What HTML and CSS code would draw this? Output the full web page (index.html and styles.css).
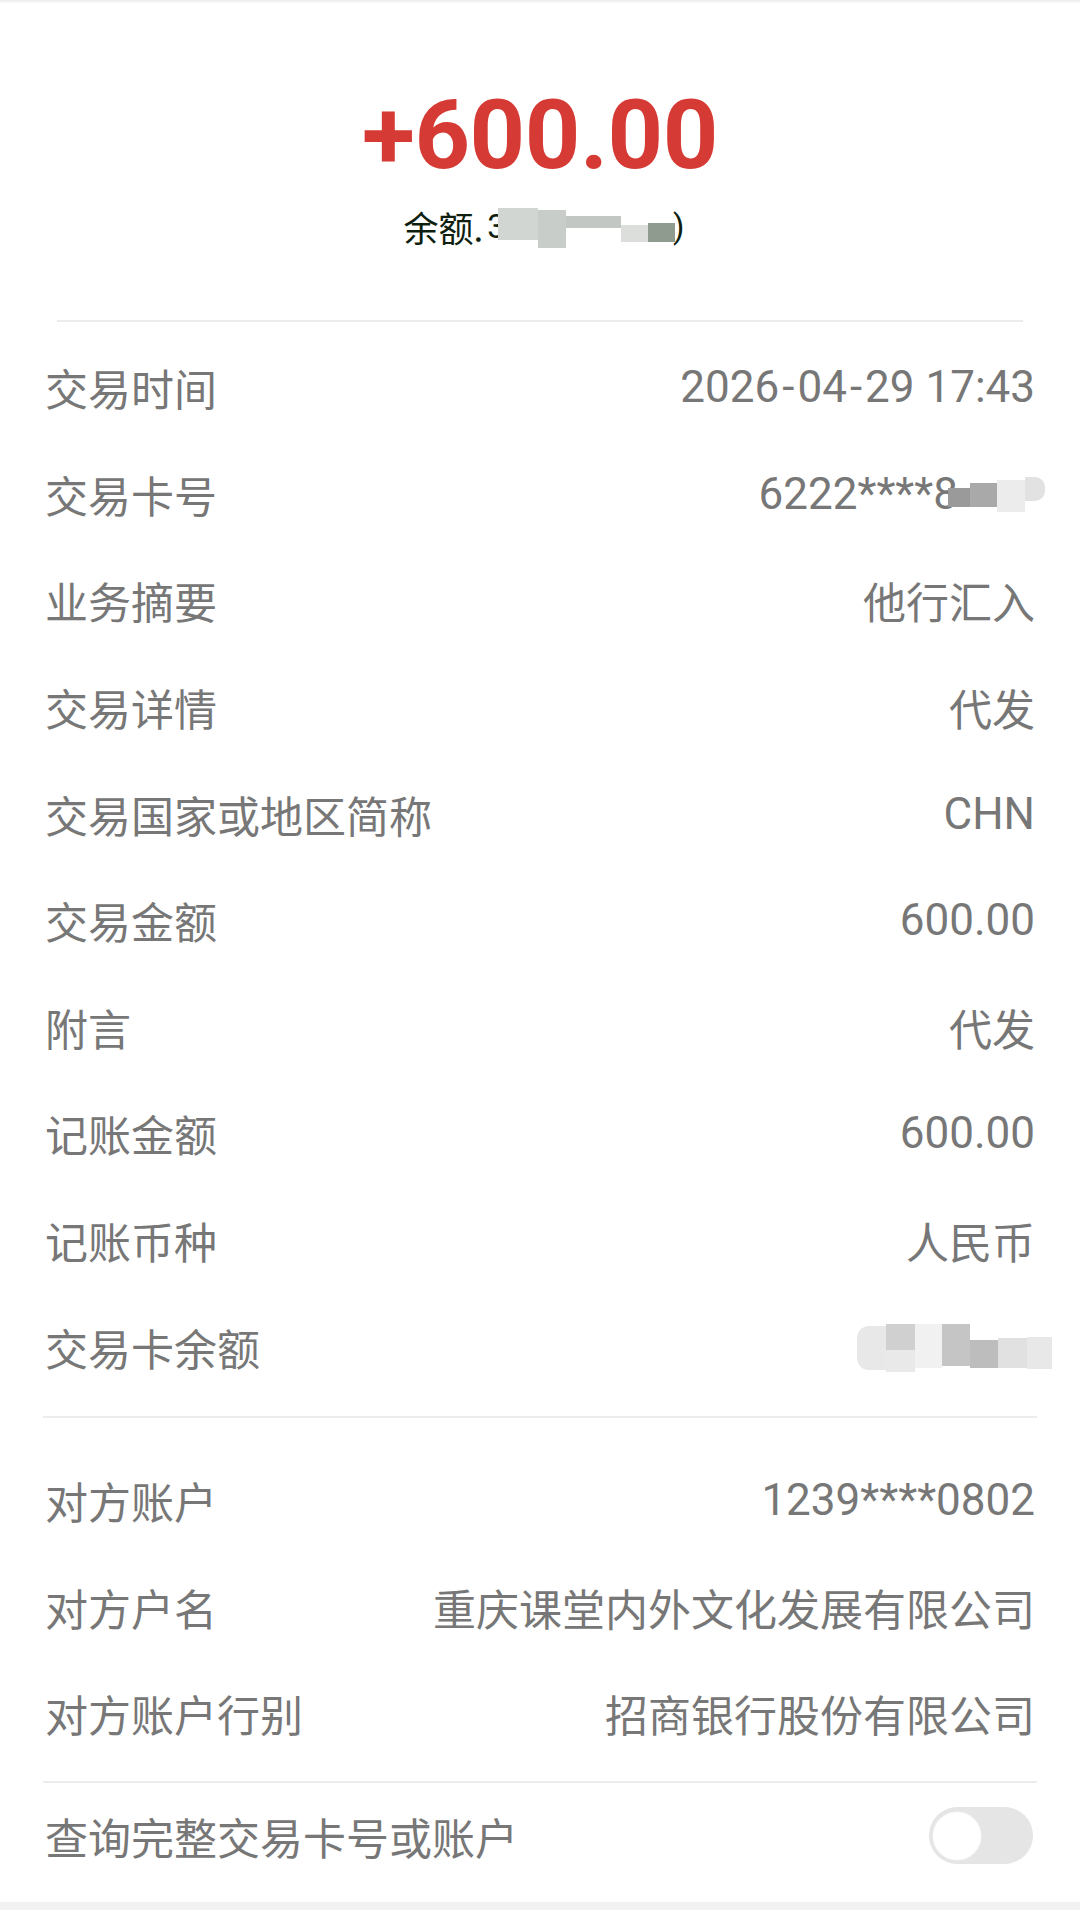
FILE: index.html
```html
<!DOCTYPE html>
<html lang="zh-CN">
<head>
<meta charset="utf-8">
<title>交易详情</title>
<link rel="stylesheet" href="styles.css">
</head>
<body>
<div class="page">
  <div class="topshade"></div>
  <header class="hero">
    <div class="amount">+600.00</div>
    <div class="balance">
      <span class="balance-label">余额.</span>
      <span class="mosaic m-bal">
        <span class="digit-peek">3</span>
        <i class="c c1"></i><i class="c c2"></i><i class="c c3"></i><i class="c c4"></i><i class="c c5"></i>
        <span class="digit-peek tail">)</span>
      </span>
    </div>
  </header>
  <div class="rule rule-top"></div>

  <section class="rows">
    <div class="row"><span class="k">交易时间</span><span class="v num">2026<span class="hy">-</span>04<span class="hy">-</span>29 17:43</span></div>
    <div class="row"><span class="k">交易卡号</span><span class="v num card">6222****8<span class="mosaic m-card"><i class="c d1"></i><i class="c d2"></i><i class="c d3"></i><i class="c d4"></i></span></span></div>
    <div class="row"><span class="k">业务摘要</span><span class="v">他行汇入</span></div>
    <div class="row"><span class="k">交易详情</span><span class="v">代发</span></div>
    <div class="row"><span class="k">交易国家或地区简称</span><span class="v num">CHN</span></div>
    <div class="row"><span class="k">交易金额</span><span class="v num">600.00</span></div>
    <div class="row"><span class="k">附言</span><span class="v">代发</span></div>
    <div class="row"><span class="k">记账金额</span><span class="v num">600.00</span></div>
    <div class="row"><span class="k">记账币种</span><span class="v">人民币</span></div>
    <div class="row"><span class="k">交易卡余额</span><span class="v"><span class="mosaic m-cb"><i class="c e1"></i><i class="c e2"></i><i class="c e3"></i><i class="c e4"></i><i class="c e5"></i><i class="c e6"></i><i class="c e7"></i></span></span></div>
  </section>
  <div class="rule"></div>

  <section class="rows rows-b">
    <div class="row"><span class="k">对方账户</span><span class="v num">1239****0802</span></div>
    <div class="row"><span class="k">对方户名</span><span class="v">重庆课堂内外文化发展有限公司</span></div>
    <div class="row"><span class="k">对方账户行别</span><span class="v">招商银行股份有限公司</span></div>
  </section>
  <div class="rule"></div>

  <div class="row row-toggle">
    <span class="k">查询完整交易卡号或账户</span>
    <span class="toggle"><span class="knob"></span></span>
  </div>
  <div class="bottom-band"></div>
</div>
</body>
</html>
```

FILE: styles.css
```css
* { box-sizing: border-box; }
html, body { margin: 0; padding: 0; background: #ffffff; }
body {
  font-family: Roboto, "Noto Sans CJK SC", "Noto Sans", sans-serif;
  color: #777777;
}
.page {
  width: 1080px;
  height: 1910px;
  display: flex;
  flex-direction: column;
  overflow: hidden;
}
.topshade {
  height: 4px;
  background: linear-gradient(#ececec, #ffffff);
}
.hero {
  height: 316px;
  display: flex;
  flex-direction: column;
  align-items: center;
  padding-top: 76px;
}
.amount {
  font-family: Roboto, "Noto Sans", sans-serif;
  font-weight: 700;
  font-size: 97px;
  line-height: 110px;
  color: #d63a34;
  letter-spacing: -0.5px;
}
.balance {
  margin-top: 16px;
  height: 42px;
  display: flex;
  align-items: center;
  font-family: "Noto Sans CJK SC", sans-serif;
  font-size: 35px;
  color: #0f1f0f;
}
.balance-label { line-height: 42px; }
.mosaic { display: inline-flex; align-items: flex-start; position: relative; }
.c { display: block; font-style: normal; }
.m-bal { margin-left: 4px; height: 38px; }
.digit-peek { font-family: Roboto, sans-serif; color: #0f1f0f; font-size: 33px; line-height: 38px; }
.m-bal .digit-peek { margin-right: -8px; }
.m-bal .tail { margin-left: -2px; }
.c1 { width: 40px; height: 32px; background: #d2d6d2; margin-top: 0; }
.c2 { width: 28px; height: 38px; background: #c9cdc9; margin-top: 2px; }
.c3 { width: 55px; height: 12px; background: #c3c7c3; margin-top: 8px; }
.c4 { width: 27px; height: 17px; background: #dcdedc; margin-top: 17px; }
.c5 { width: 27px; height: 19px; background: #8e9b8e; margin-top: 15px; }

.rule {
  height: 2px;
  background: #ececec;
  margin: 0 43px;
  flex: none;
}
.rule-top { margin: 0 57px; }

.rows { padding-top: 12px; padding-bottom: 16px; }
.rows-b { padding-top: 29px; padding-bottom: 14px; }
.row {
  height: 106.6px;
  padding: 0 45px;
  display: flex;
  align-items: center;
  justify-content: space-between;
  font-size: 43px;
  line-height: 50px;
  color: #777777;
}
.k { font-family: "Noto Sans CJK SC", sans-serif; white-space: nowrap; }
.v { font-family: "Noto Sans CJK SC", sans-serif; white-space: nowrap; text-align: right; display: inline-flex; align-items: center; }
.num { font-family: Roboto, "Noto Sans CJK SC", sans-serif; font-size: 44px; letter-spacing: 0; }
.hy { margin: 0 3px; }
.card { margin-right: -10px; }
.m-card { margin-left: -10px; height: 40px; }
.d1 { width: 22px; height: 19px; background: #9a9a9a; margin-top: 14px; }
.d2 { width: 27px; height: 24px; background: #a9a9a9; margin-top: 9px; }
.d3 { width: 28px; height: 32px; background: #ececec; margin-top: 6px; }
.d4 { width: 20px; height: 24px; background: #e2e2e2; margin-top: 3px; border-radius: 0 10px 10px 0; }

.m-cb { margin-right: -17px; height: 50px; }
.e1 { width: 29px; height: 44px; background: #e8e8e8; margin-top: 4px; border-radius: 12px 0 0 12px; }
.e2 { width: 29px; height: 48px; background: linear-gradient(#d0d0d0 0 55%, #e9e9e9 55%); margin-top: 2px; }
.e3 { width: 27px; height: 44px; background: #f1f1f1; margin-top: 2px; }
.e4 { width: 28px; height: 42px; background: #c5c5c5; margin-top: 2px; }
.e5 { width: 28px; height: 28px; background: #bdbdbd; margin-top: 18px; }
.e6 { width: 29px; height: 30px; background: #e1e1e1; margin-top: 16px; }
.e7 { width: 25px; height: 32px; background: #e8e8e8; margin-top: 15px; }

.row-toggle { height: 106px; }
.toggle {
  width: 104px;
  height: 57px;
  border-radius: 29px;
  background: #e5e5e5;
  display: flex;
  align-items: center;
  padding-left: 4px;
  margin-right: 2px;
}
.knob {
  width: 48px;
  height: 48px;
  border-radius: 50%;
  background: #ffffff;
  box-shadow: 0 0 1px 1px #ececec;
}
.bottom-band {
  margin-top: auto;
  height: 8px;
  background: #f2f2f2;
}
```
